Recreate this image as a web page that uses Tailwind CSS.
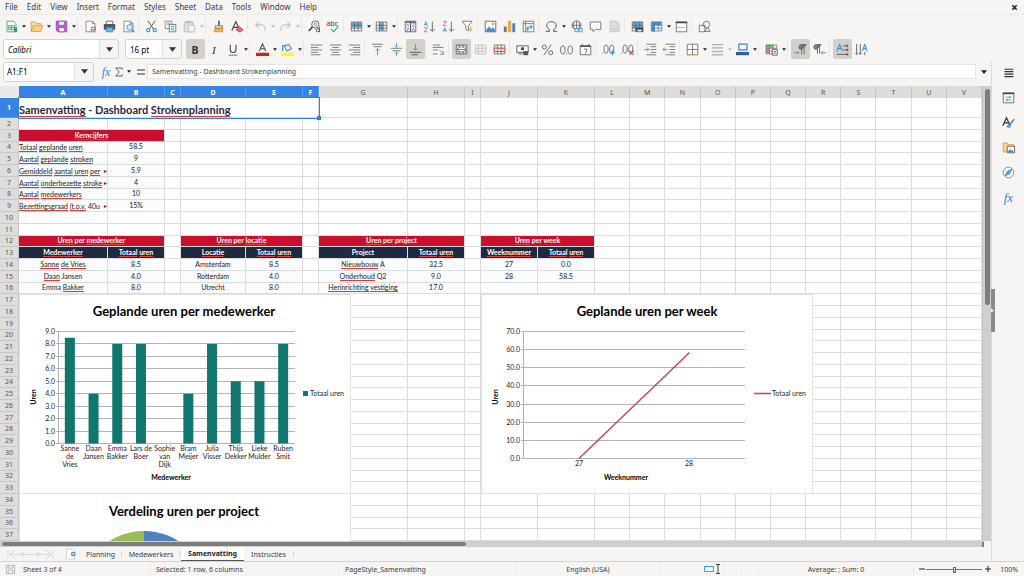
<!DOCTYPE html>
<html lang="nl">
<head>
    <meta charset="UTF-8">
    <meta name="viewport" content="width=device-width, initial-scale=1.0">
    <title>Dashboard Strokenplanning</title>
    <script src="https://cdn.jsdelivr.net/npm/@tailwindcss/browser@4"></script>
</head>
<body class="h-screen overflow-hidden flex flex-col bg-[#f6f5f4] text-[#3c3c3c] text-[7px] leading-none font-['Noto_Sans',sans-serif]">
    <!-- Menu bar -->
    <header class="h-[15px] shrink-0 flex items-center justify-between border-b border-[#ebeae8] pl-[5px] pr-[6px]">
        <nav>
            <ul id="menu" class="flex gap-[9px]"></ul>
        </nav>
        <button aria-label="Close document" class="w-[7px] h-[7px]"><svg viewBox="0 0 8 8" class="w-full h-full" stroke="#222" stroke-width="1.8"><path d="M1.5 1.5l5 5M6.500 1.500l-5 5"/></svg></button>
    </header>

    <!-- Toolbars -->
    <div id="standardBar" class="h-[22px] shrink-0 flex items-center pl-[2px]"></div>
    <div class="h-[24px] shrink-0 flex items-center pl-[3px]">
        <div class="w-[116px] h-[20px] flex border border-[#d5d2cf] rounded-[3px] overflow-hidden">
            <input aria-label="Font name" value="Calibri" class="min-w-0 flex-1 bg-white px-[4px] text-[8px] italic text-black outline-none">
            <button aria-label="Font list" class="w-[19px] flex items-center justify-center border-l border-[#e2e0dd]"><svg viewBox="0 0 8 5" class="w-[7px] h-[5px]"><path d="M0 0h8L4 5z" fill="#333"/></svg></button>
        </div>
        <div class="w-[57px] h-[20px] ml-[6px] mr-[4px] flex border border-[#d5d2cf] rounded-[3px] overflow-hidden">
            <input aria-label="Font size" value="16 pt" class="min-w-0 flex-1 bg-white px-[4px] text-[8px] text-black outline-none">
            <button aria-label="Size list" class="w-[19px] flex items-center justify-center border-l border-[#e2e0dd]"><svg viewBox="0 0 8 5" class="w-[7px] h-[5px]"><path d="M0 0h8L4 5z" fill="#333"/></svg></button>
        </div>
        <div id="formatBar" class="flex items-center"></div>
    </div>

    <div class="flex-1 min-h-0 flex">
        <main class="flex-1 min-w-0 flex flex-col">
            <!-- Formula bar -->
            <div class="h-[25px] shrink-0 flex items-center pl-[3px] pb-[4px]">
                <div class="w-[91px] h-[20px] flex border border-[#d5d2cf] rounded-[3px] overflow-hidden">
                    <input aria-label="Name box" value="A1:F1" class="min-w-0 flex-1 bg-white px-[3px] text-[8px] text-black outline-none">
                    <button aria-label="Names" class="w-[19px] flex items-center justify-center border-l border-[#e2e0dd]"><svg viewBox="0 0 8 5" class="w-[7px] h-[5px]"><path d="M0 0h8L4 5z" fill="#333"/></svg></button>
                </div>
                <button aria-label="Function wizard" class="w-[12px] ml-[6px] font-['Liberation_Serif',serif] italic text-[12px] text-[#2f86c6]">fx</button>
                <button aria-label="Sum" class="w-[12px] ml-px flex justify-center"><svg viewBox="0 0 10 12" class="w-[8px] h-[10px]" fill="none" stroke="#444"><path d="M9 3V1H1l4.500 5L1 11h8V9"/></svg></button>
                <button aria-label="Sum options" class="w-[8px] flex justify-center"><svg viewBox="0 0 6 4" class="w-[4px] h-[3px]"><path d="M0 0h6L3 4z" fill="#222"/></svg></button>
                <button aria-label="Formula" class="w-[10px] ml-[3px] flex justify-center"><svg viewBox="0 0 8 6" class="w-[8px] h-[6px]" stroke="#333" stroke-width="1.2"><path d="M0 1h8M0 5h8"/></svg></button>
                <input aria-label="Input line" value="Samenvatting - Dashboard Strokenplanning" class="flex-1 min-w-0 h-[15px] ml-px bg-white border border-[#e6e4e1] px-[4px] text-[7px] outline-none">
                <button aria-label="Expand formula bar" class="w-[15px] flex justify-center"><svg viewBox="0 0 8 5" class="w-[6px] h-[4px]"><path d="M0 0h8L4 5z" fill="#222"/></svg></button>
            </div>

            <!-- Sheet -->
            <div class="flex-1 min-h-0 flex">
                <div class="flex-1 min-w-0 relative overflow-hidden bg-white font-[Lato,sans-serif] text-[#222]">
                    <table class="flex flex-col h-full">
                        <thead id="columns" class="block h-[12px] shrink-0"></thead>
                        <tbody id="rows" class="flex flex-col flex-1 min-h-0"></tbody>
                    </table>
                    <!-- Selection of A1:F1 -->
                    <div class="absolute left-[18px] top-[11px] w-[302px] h-[22px] border border-[#2a7fe0]">
                        <div class="absolute -right-[2px] -bottom-[2px] w-[4px] h-[4px] bg-[#2a7fe0]"></div>
                    </div>
                    <!-- Floating charts -->
                    <svg id="barChart" viewBox="1 1 330 198" class="absolute left-[19px] top-[208px] w-[332px] h-[200px] bg-white border border-[#e2e2e2]"></svg>
                    <svg id="lineChart" viewBox="1 1 330 198" class="absolute left-[481px] top-[208px] w-[332px] h-[200px] bg-white border border-[#e2e2e2]"></svg>
                    <svg viewBox="1 0 330 200" class="absolute left-[19px] top-[408px] w-[332px] h-[200px] bg-white border-x border-[#e2e2e2]">
                        <text x="165" y="22" text-anchor="middle" class="text-[13px] font-bold fill-black">Verdeling uren per project</text>
                        <path d="M125 37a64 64 0 0 0-64 64h64z" fill="#9bbb59"/>
                        <path d="M125 37a64 64 0 0 1 64 64h-64z" fill="#4f81bd"/>
                    </svg>
                </div>
                <div class="w-[9px] bg-[#cfcfcf] border-l border-[#c4c4c4] pt-[3px] flex flex-col items-center">
                    <div class="w-[5px] h-[216px] rounded-full bg-[#7d7d7d]"></div>
                </div>
            </div>
            <div class="h-[6px] shrink-0 mr-[7px] bg-[#cfcfcf] pl-[2px] flex items-center justify-between">
                <div class="w-[464px] h-[4px] rounded-full bg-[#7d7d7d]"></div>
                <div class="w-[2px] h-[5px] bg-[#7d7d7d]"></div>
            </div>

            <!-- Sheet tabs -->
            <div class="h-[14px] shrink-0 flex items-stretch text-[7px]">
                <div class="w-[60px] flex items-center justify-center text-[#dcdad7]">
                    <svg viewBox="0 0 52 12" class="w-[52px] h-[11px]" fill="none" stroke="currentColor" stroke-width="1.2"><path d="M2 1v10M10 1L4 6l6 5M20 3l-4 3 4 3M33 3l4 3-4 3M43 1l6 5-6 5M51 1v10M4 6h45"/></svg>
                </div>
                <button aria-label="Add sheet" class="w-[20px] flex items-center justify-center"><svg viewBox="0 0 12 13" class="w-[11px] h-[12px]"><path d="M1.500 1h7l2 2v9h-9z" fill="#fff" stroke="#ccc"/><circle cx="9" cy="6.500" r="2.500" fill="#3a83c8"/><path d="M9 5v3M7.500 6.500h3" stroke="#fff" stroke-width=".8"/></svg></button>
                <button class="w-[42px] border-r border-[#d5d3d0] my-[4px] text-[7px]">Planning</button>
                <button class="w-[59px] border-r border-[#d5d3d0] my-[4px] text-[7px]">Medewerkers</button>
                <button class="w-[63px] bg-white border-b border-[#555] font-bold text-[#222]">Samenvatting</button>
                <button class="w-[50px] border-r border-[#d5d3d0] my-[4px] text-[7px]">Instructies</button>
            </div>
        </main>

        <!-- Sidebar -->
        <aside class="w-[33px] shrink-0 border-l border-[#dcdad7] relative flex flex-col items-center gap-[11px] pt-[4px]" id="sidebar">
            <div class="absolute -left-px top-[228px] w-[4px] h-[43px] bg-[#8b8b8b] flex items-center"><svg viewBox="0 0 4 6" class="w-[3px] h-[5px]"><path d="M0 0l4 3-4 3z" fill="#eee"/></svg></div>
        </aside>
    </div>

    <!-- Status bar -->
    <footer class="h-[15px] shrink-0 border-t border-[#d5d3d0] grid grid-cols-[151fr_188fr_178fr_143fr_65fr_17fr_17fr_155fr_110fr] items-center text-[7px]">
        <div class="flex items-center gap-[7px] pl-[5px] border-r border-[#e8e6e3]"><svg viewBox="0 0 12 12" class="w-[11px] h-[11px]" fill="none" stroke="#b5b3b0"><path d="M1.500 1.500h9v9h-9zM3.500 1.500v3h5v-3M3.500 10.500v-4h5v4"/></svg>Sheet 3 of 4</div>
        <div class="pl-[5px] border-r border-[#e8e6e3]">Selected: 1 row, 6 columns</div>
        <div class="pl-[6px] border-r border-[#e8e6e3]">PageStyle_Samenvatting</div>
        <div class="text-center border-r border-[#e8e6e3]">English (USA)</div>
        <div class="flex justify-end items-center gap-px pr-[3px] border-r border-[#e8e6e3]"><svg viewBox="0 0 18 10" class="w-[18px] h-[10px]" fill="none"><path d="M1.500 2.500h9v5h-9z" stroke="#3fa0cf" fill="#fff"/><path d="M13 .5h4M15 .5v9M13 9.500h4" stroke="#444"/></svg></div>
        <div class="border-r border-[#e8e6e3] h-[8px]"></div>
        <div class="border-r border-[#e8e6e3] h-[8px]"></div>
        <div class="text-center border-r border-[#e8e6e3]">Average: ; Sum: 0</div>
        <div class="flex items-center pl-[5px] pr-[6px]">
            <button aria-label="Zoom out" class="w-[7px] flex"><svg viewBox="0 0 6 6" class="w-[6px] h-[6px]" stroke="#222"><path d="M0 3h6"/></svg></button>
            <input type="range" aria-label="Zoom" class="min-w-0 w-[56px] h-[6px] appearance-none bg-transparent [&::-webkit-slider-runnable-track]:h-px [&::-webkit-slider-runnable-track]:bg-[#777] [&::-webkit-slider-thumb]:appearance-none [&::-webkit-slider-thumb]:w-[3px] [&::-webkit-slider-thumb]:h-[6px] [&::-webkit-slider-thumb]:-mt-[2px] [&::-webkit-slider-thumb]:bg-[#ddd] [&::-webkit-slider-thumb]:border [&::-webkit-slider-thumb]:border-[#666]">
            <button aria-label="Zoom in" class="w-[7px] ml-[3px] flex"><svg viewBox="0 0 6 6" class="w-[6px] h-[6px]" stroke="#222"><path d="M0 3h6M3 0v6"/></svg></button>
            <span class="ml-auto">100%</span>
        </div>
    </footer>

    <script>
        const menus = ["File", "Edit", "View", "Insert", "Format", "Styles", "Sheet", "Data", "Tools", "Window", "Help"];
        document.getElementById("menu").innerHTML = menus.map(m => `<li><button class="text-[8px]">${m}</button></li>`).join("");

        // Icon bodies, all drawn on a 16 x 16 grid
        const page = '<path d="M2.500 1.500h8l3 3v10h-11z" fill="#fff" stroke="#777"/><path d="M10.500 1.500v3h3" stroke="#777"/>';
        const lines = (d, c = "#666") => `<path d="${d}" stroke="${c}"/>`;
        const tableGrid = c => `<path d="M1.500 2.500h13v11h-13zM1.500 6.500h13M1.500 10h13M5.500 2.500v11M10 2.500v11" stroke="${c}"/>`;
        const icons = {
            new: '<path d="M2.500 1.500h8l3 3v10h-11z" fill="#fff" stroke="#2f9e5b"/><path d="M4.500 7h7v5h-7zM4.500 9.500h7M8 7v5" stroke="#2f9e5b"/><path d="M11 9h4v6h-4z" fill="#36a865"/>',
            open: '<path d="M1.500 13.500v-11h5l1 2h6v2" fill="#fbe3b5" stroke="#df8f2f"/><path d="M1.500 14l2.500-7h11.500l-2.500 7z" fill="#fad28c" stroke="#df8f2f"/>',
            save: '<path d="M1.500 1.500h13v13h-11l-2-2z" fill="#b768c9" stroke="#9742ab"/><path d="M4.500 1.500h7v5h-7z" fill="#fff" stroke="#9742ab"/><path d="M4.500 9.500h7v5h-7z" fill="#fff" stroke="#9742ab"/>',
            pdf: page + '<path d="M9 9h5M9 9v6M14 9v3h-5M11 12l3 3" stroke="#d33f3f"/>',
            print: '<path d="M4 1.500h8v4h-8z" fill="#fff" stroke="#555"/><path d="M1 5h14v7H1z" fill="#555"/><path d="M4 9h8v5.500h-8z" fill="#6fb8e6" stroke="#2d80b8"/>',
            preview: page + '<circle cx="9.500" cy="9" r="3.500" fill="#d6eefb" stroke="#2f86c6"/><path d="M12 12l3 3" stroke="#2f86c6" stroke-width="1.500"/>',
            cut: '<path d="M3.500 1l7 10M12.500 1l-7 10" stroke="#555" stroke-width="1.200"/><circle cx="4" cy="12.500" r="2" stroke="#2f86c6" stroke-width="1.300"/><circle cx="12" cy="12.500" r="2" stroke="#2f86c6" stroke-width="1.300"/>',
            copy: '<path d="M1.500 1.500h8v9h-8z" fill="#fff" stroke="#777"/><path d="M3.500 4h4M3.500 6h4" stroke="#3a93cf"/><path d="M6.500 5.500h8v9h-8z" fill="#fff" stroke="#666"/><path d="M8.500 8h4M8.500 10h4M8.500 12h4" stroke="#3a93cf"/>',
            paste: '<path d="M1.500 2.500h11v12h-11z" fill="#ddd" stroke="#bbb"/><path d="M4 1h6v3H4z" fill="#bbb"/><path d="M6.500 6.500h8v8h-8z" fill="#f3f3f3" stroke="#bbb"/>',
            brush: '<path d="M7.500 1h2v6h-2z" fill="#555"/><path d="M4 7h9v3H4z" fill="#ddd" stroke="#777"/><path d="M3.500 10.500h10l-1 4h-10z" fill="#f0b35a" stroke="#d7892e"/>',
            clear: '<path d="M1 13L6 2l5 11M3 9h6" stroke="#444" stroke-width="1.400"/><path d="M10 8l5 4-4 3-5-3z" fill="#e56d6d" stroke="#cf3d3d"/>',
            undo: '<path d="M6 2L2 6l4 4M2 6h7c4 0 5 3 4.500 7" stroke="#c4c2bf" stroke-width="1.300"/>',
            redo: '<path d="M10 2l4 4-4 4M14 6H7c-4 0-5 3-4.500 7" stroke="#c4c2bf" stroke-width="1.300"/>',
            find: '<circle cx="9" cy="5.500" r="4.500" stroke="#555"/><path d="M5.500 8.500l-4.500 5" stroke="#444" stroke-width="2"/><circle cx="9" cy="5.500" r="1.800" stroke="#3a93cf"/><circle cx="12" cy="12.500" r="2" stroke="#444"/><path d="M14 8v7" stroke="#444"/>',
            spell: '<text x="-1" y="7" font-size="9" fill="#444">abc</text><path d="M5 11l3 3.500 6-7" stroke="#3bb273" stroke-width="1.500"/>',
            row: '<path d="M2 3h12v6H2z" fill="#5badde"/>' + tableGrid("#666"),
            column: '<path d="M5 3h5v10H5z" fill="#5badde"/>' + tableGrid("#666"),
            sort: '<path d="M1.500 1.500h13v13h-13z" fill="#fff" stroke="#555"/><path d="M1.500 2.500h13M8 3v11.500" stroke="#555" stroke-width="1.500"/><path d="M3 8l1.500-3.500L6 8M10 13.500l1.500-3.500 1.500 3.500" stroke="#3a93cf"/><path d="M10 4.500h3L10 8h3M3 10h3l-3 3.500h3" stroke="#b45ac8"/>',
            asc: '<path d="M1.500 7l2-5 2 5M2 5.500h3" stroke="#3a93cf"/><path d="M1.500 9.500h4l-4 5h4" stroke="#b45ac8"/><path d="M11.500 2v12M8.500 11l3 3 3-3" stroke="#555"/>',
            desc: '<path d="M1.500 14.500l2-5 2 5M2 13h3" stroke="#3a93cf"/><path d="M1.500 2h4l-4 5h4" stroke="#b45ac8"/><path d="M11.500 2v12M8.500 11l3 3 3-3" stroke="#555"/>',
            filter: '<path d="M1.500 1.500h12l-4.500 6v6l-3-2v-4z" fill="#fff" stroke="#666"/><path d="M13 7l-4 5h3l-2 4 5-5h-3z" fill="#f0a03c"/>',
            image: '<path d="M1.500 1.500h13v13h-13z" fill="#fff" stroke="#555"/><path d="M2 13l4-5 3 3 2-2 3 4v1.500H2z" fill="#3a93cf"/><circle cx="11" cy="5" r="1.800" fill="#f0b035"/>',
            chart: '<path d="M1 8h3.500v7H1z" fill="#777"/><path d="M6 1h4v14H6z" fill="#efac43"/><path d="M11.500 4h3.500v11h-3.500z" fill="#3a83c8"/>',
            pivot: '<path d="M1.500 1.500h13v13h-13zM1.500 4.500h13M4.500 1.500v13" fill="#fff" stroke="#666"/><path d="M7 12V8.500h5M10.500 6.500l2 2-2 2M5.500 10.500l1.500 2 1.500-2" stroke="#3a93cf" stroke-width="1.300"/>',
            omega: '<path d="M1 14h4.500v-2C0 9 1.500 2 8 2s8 7 2.500 10v2H15" stroke="#555" stroke-width="1.200"/>',
            link: '<circle cx="8" cy="6.500" r="5.500" stroke="#666"/><path d="M2.500 6.500h11M8 1v11M5.500 2c-2 3-2 6 0 9M10.500 2c2 3 2 6 0 9" stroke="#666"/><path d="M6 10.500h4v4H6zM11 10.500h4v4h-4z" fill="#d6eefb" stroke="#3a93cf"/>',
            comment: '<path d="M1.500 2.500h13v9H8l-3 3v-3H1.500z" fill="#fff" stroke="#666"/>',
            footer: '<path d="M2.500 1.500h8l3 3v10h-11z" fill="#ddd" stroke="#bbb"/><path d="M5 11h6" stroke="#bbb"/>',
            printArea: '<path d="M2 2h12v8H2z" fill="#5badde"/>' + tableGrid("#666") + '<path d="M6 9h9v6H6z" fill="#555"/><path d="M8 12h5v2H8z" fill="#fff"/>',
            freeze: '<path d="M2 2h12v4H2zM2 2h4v12H2z" fill="#3a93cf"/>' + tableGrid("#5a7f9c"),
            split: '<path d="M1.500 2.500h13v12h-13z" fill="#fff" stroke="#666"/><path d="M1 3h14" stroke="#444" stroke-width="2"/><path d="M1.500 9h13" stroke="#3a93cf" stroke-dasharray="2 1"/>',
            shapes: '<path d="M1.500 6.500h7v8h-7z" stroke="#666"/><circle cx="10.500" cy="5.500" r="4" stroke="#666"/><path d="M8 14l4-5 3 5z" stroke="#666"/>',
            bold: '<text x="3" y="13" font-size="13" font-weight="700" fill="#333">B</text>',
            italic: '<text x="5" y="13" font-size="14" font-style="italic" font-family="Liberation Serif" fill="#333">I</text>',
            underline: '<path d="M4 2v6c0 5 7 5 7 0V2" stroke="#444" stroke-width="1.300"/><path d="M2 15h11" stroke="#3a93cf" stroke-width="1.300"/>',
            color: '<path d="M4 10L8 1l4 9M5.500 7h5" stroke="#444" stroke-width="1.300"/><path d="M0 12h16v4H0z" fill="#c9211e"/>',
            highlight: '<path d="M4 3l6-1 3 5-6 3z" fill="#d6eefb" stroke="#555"/><path d="M2 3v7M2 3l3 1" stroke="#3a93cf" stroke-width="1.500"/><path d="M0 12h16v4H0z" fill="#ffff00"/>',
            left: lines("M1 2.500h14M1 5.500h9M1 8.500h14M1 11.500h9M1 14.500h12"),
            center: lines("M1 2.500h14M4 5.500h8M1 8.500h14M4 11.500h8M2 14.500h12"),
            right: lines("M1 2.500h14M6 5.500h9M1 8.500h14M6 11.500h9M3 14.500h12"),
            top: lines("M1 1.500h14M3 4.500h10") + lines("M8 15V7M5.500 9.500L8 7l2.500 2.500", "#3a93cf"),
            middle: lines("M1 6.500h14M3 9.500h10") + lines("M8 0v5M6 3l2 2 2-2M8 16v-5M6 13l2-2 2 2", "#3a93cf"),
            bottom: lines("M1 11.500h14M3 14.500h8", "#444") + lines("M8 1v8M5.500 6.500L8 9l2.500-2.500", "#3a93cf"),
            wrap: lines("M1 2.500h9M1 5.500h13M1 8.500h6M1 13.500h6") + lines("M9 8.500l5 5M14 10v4h-4", "#3a93cf"),
            merge: '<path d="M1.500 5.500h13v5h-13z" fill="#fff"/>' + tableGrid("#4a5f75") + '<path d="M2 6h12v4H2z" fill="#fff"/><path d="M2 8h12M4 6L2 8l2 2M12 6l2 2-2 2" stroke="#3a93cf" stroke-width="1.300"/>',
            mergeGrey: tableGrid("#bbb"),
            unmerge: tableGrid("#666") + '<path d="M1.500 6.500h13v4h-13zM6 6.500v4M10 6.500v4" fill="#fff" stroke="#d33f3f"/>',
            currency: '<path d="M1 3.500h14v8H1z" fill="#fff" stroke="#444"/><circle cx="8" cy="7" r="2" fill="#444"/><path d="M9 10h6v5H9z" fill="#555"/><path d="M3 13.500h5" stroke="#444"/>',
            percent: '<circle cx="4" cy="5" r="2.500" stroke="#555"/><circle cx="12" cy="12" r="2.500" stroke="#555"/><path d="M12.500 2l-9 13" stroke="#555"/>',
            number: '<ellipse cx="3.500" cy="8.500" rx="2.800" ry="5" stroke="#555"/><ellipse cx="12.500" cy="8.500" rx="2.800" ry="5" stroke="#555"/><path d="M7.500 13h1v1h-1z" fill="#555"/>',
            date: '<path d="M1.500 3.500h13v11h-13z" fill="#fff" stroke="#555"/><path d="M1.500 4h13" stroke="#555" stroke-width="2"/><path d="M4 1v3M12 1v3" stroke="#555"/><path d="M6 7.500h4l-2 5.500" stroke="#555"/>',
            addDec: '<ellipse cx="5" cy="7.500" rx="2.500" ry="5" stroke="#555"/><ellipse cx="12" cy="7.500" rx="2.500" ry="5" stroke="#555"/><path d="M0 12h1v1H0z" fill="#555"/><path d="M13 9v6M10 12h6" stroke="#3a93cf" stroke-width="1.300"/>',
            delDec: '<ellipse cx="5" cy="7.500" rx="2.500" ry="5" stroke="#555"/><ellipse cx="12" cy="7.500" rx="2.500" ry="5" stroke="#555"/><path d="M0 12h1v1H0z" fill="#555"/><path d="M10.500 9.500l5 5M15.500 9.500l-5 5" stroke="#d33f3f" stroke-width="1.300"/>',
            indent: lines("M3 1.500h12M8 4.500h7M8 8h7M8 11.500h7M3 14.500h12") + lines("M0 8h6M3.500 5.500L6 8l-2.500 2.500", "#3a93cf"),
            outdent: lines("M3 1.500h12M8 4.500h7M8 8h7M8 11.500h7M3 14.500h12") + lines("M0 8h6M2.500 5.500L0 8l2.500 2.500", "#3a93cf"),
            borders: '<path d="M1.500 1.500h13v13h-13zM8 1.500v13M1.500 8h13" fill="#fff" stroke="#666"/><path d="M1.500 14.500h13" stroke="#e0a050"/>',
            lineStyle: '<path d="M1 2h14M1 6h14" stroke="#aaa" stroke-width="1.300"/><path d="M1 10.500h14M1 14.500h14" stroke="#b5b5b5" stroke-width="2"/>',
            lineColor: '<path d="M3.500 1.500h10v7h-10z" fill="#fff" stroke="#3a83c8" stroke-width="1.500"/><path d="M0 11h16v4H0z" fill="#2a62a5"/>',
            conditional: '<path d="M1 2h9v4H1z" fill="#6dc06d"/><path d="M1 6h5v7H1z" fill="#e78a8a"/>' + tableGrid("#777") + '<path d="M9 8h6v7H9z" fill="#fff" stroke="#555"/><path d="M10.500 10.500h3M10.500 12.500h3" stroke="#555"/>',
            ltr: '<path d="M9.500 14V2M12.500 14V2M15 2H9a3 3 0 0 0 0 6z" fill="#8a8886" stroke="#555"/>' + lines("M0 12h6M4 10l2 2-2 2", "#3a93cf"),
            rtl: '<path d="M5.500 13V2M8 13V2M10 2H4a3 3 0 0 0 0 6z" fill="#8a8886" stroke="#555"/>' + lines("M16 12h-6M12 10l-2 2 2 2", "#3a93cf"),
            horizontal: '<path d="M1 10l3.500-8L8 10M2.500 7h4" stroke="#3a93cf" stroke-width="1.400"/>' + lines("M9 3.500h6M13 2l2 1.500L13 5M9 8.500h6M13 7l2 1.500-2 1.500M1 14h14M13 12.500l2 1.500-2 1.500", "#444"),
            vertical: '<path d="M9 10l3-8 3 8M10 7h4" stroke="#3a93cf" stroke-width="1.400"/>' + lines("M2 1v13M.5 12L2 14l1.500-2M6.500 1v13M5 12l1.500 2L8 12M12 11v4", "#555"),
            hamburger: '<path d="M3 4h11M3 7h11M3 10h11M3 13h11" stroke="#333" stroke-width="1.500"/>',
            properties: '<path d="M1.500 2.500h13v12h-13z" fill="#fff" stroke="#555"/><path d="M1 3h14" stroke="#444" stroke-width="2"/><path d="M4 7.500h8M4 11h8M9.500 6v3M6.500 9.500v3" stroke="#3a93cf"/>',
            styles: '<path d="M1 12L5.500 2 10 12M3 8.500h5.500" stroke="#333" stroke-width="1.500"/><path d="M15 4l-6 7" stroke="#777" stroke-width="2"/><path d="M6 13c1-3 4-3 5-1-1 3-3 3-5 1z" fill="#5badde" stroke="#3a83c8"/>',
            gallery: '<path d="M1.500 13.500v-11h5l1 2h7v9z" fill="#fad28c" stroke="#df8f2f"/><path d="M6.500 6.500h9v8h-9z" fill="#fff" stroke="#555"/><path d="M7 13l3-3 2 2 1-1 2 3H7z" fill="#3a93cf"/>',
            navigator: '<circle cx="8" cy="8" r="6.500" fill="#fff" stroke="#777"/><path d="M12 4L9.500 9.500 4 12l2.500-5.500z" fill="#5badde" stroke="#2f86c6"/>',
            functions: '<text x="2" y="13" font-size="16" font-style="italic" font-family="Liberation Serif" fill="#2f86c6">fx</text>'
        };
        const svg = name => `<svg viewBox="0 0 16 16" fill="none" class="w-[13px] h-[13px] overflow-visible">${icons[name]}</svg>`;

        // "|" is a separator, "v" a drop-down arrow, "x" a disabled arrow, a leading "*" marks a pressed button
        function buildBar(id, spec) {
            document.getElementById(id).innerHTML = spec.split(" ").map(s => {
                if (s === "|") return '<span class="w-[4px] h-[18px] border-l border-[#eae8e5]"></span>';
                if (s === "v" || s === "x") return `<button aria-label="Options" class="w-[6px] h-[19px] flex items-center justify-center"><svg viewBox="0 0 6 4" class="w-[4px] h-[3px]"><path d="M0 0h6L3 4z" fill="${s === "v" ? "#222" : "#bbb"}"/></svg></button>`;
                const name = s.replace("*", "");
                const cls = s[0] === "*" ? "w-[19px] h-[20px] flex items-center justify-center rounded-[2px] bg-[#d3d0cc]" : "w-[19px] h-[20px] flex items-center justify-center";
                return `<button aria-label="${name}" class="${cls}">${svg(name)}</button>`;
            }).join("");
        }
        buildBar("standardBar", "new v open v save v | pdf print preview | cut copy paste x | brush clear | undo x redo x | find spell | row v column v | sort asc desc filter | image chart pivot | omega v link comment footer | printArea freeze v split | shapes");
        buildBar("formatBar", "*bold italic underline v | color v highlight v | left center right | top middle *bottom | wrap | *merge mergeGrey unmerge | currency v percent number date | addDec delDec | indent outdent | borders v lineStyle x lineColor v | conditional v | *ltr rtl | *horizontal vertical");
        document.getElementById("sidebar").insertAdjacentHTML("beforeend",
            ["hamburger", "properties", "styles", "gallery", "navigator", "functions"].map(n => `<button aria-label="${n}" class="h-[14px]">${svg(n)}</button>`).join(""));

        // Sheet: column A to V, row 1 to 37
        const letters = "ABCDEFGHIJKLMNOPQRSTUV".split("");
        const rowCls = "grid grid-cols-[19px_89px_57px_16px_65px_57px_16px_89px_57px_16px_57px_57px_repeat(11,minmax(0,1fr))]";
        const headCls = "border-r border-[#c9c8c6] bg-[#dedddb] text-[#555] font-normal text-[7px] flex items-center justify-center font-['Noto_Sans',sans-serif]";
        const headSelCls = "border-r border-[#5a9bea] bg-[#3584e4] text-white font-bold text-[7px] flex items-center justify-center font-['Noto_Sans',sans-serif]";
        document.getElementById("columns").innerHTML = `<tr class="${rowCls} h-[12px]"><th class="bg-[#e9e8e6]"></th>` +
            letters.map((l, i) => `<th scope="col" class="${i < 6 ? headSelCls : headCls}">${l}</th>`).join("") + "</tr>";

        const base = "relative border-r border-b border-[#dcdcdc] whitespace-nowrap overflow-hidden flex items-center min-h-0 text-[7px] ";
        const kinds = {
            empty: base,
            title: base + "col-span-6 text-[11px] font-bold text-[#1f2940] pt-[4px]",
            red: base + "col-span-2 justify-center bg-[#c8102e] text-white font-bold",
            navy: base + "justify-center bg-[#1f2940] text-white font-bold",
            label: base + "bg-[#f9fbfc] pt-[2px]",
            value: base + "justify-center bg-[#f9fbfc]"
        };
        // "~word" gets the spelling underline
        const mark = t => t.split(" ").map(w => w[0] === "~" ? `<span class="border-b border-[#e23838]">${w.slice(1)}</span>` : w).join("&nbsp;");
        const cells = {
            1: { A: ["title", "~Samenvatting - Dashboard ~Strokenplanning"] },
            3: { A: ["red", "~Kerncijfers"] },
            4: { A: ["label", "~Totaal ~geplande ~uren"], B: ["value", "58.5"] },
            5: { A: ["label", "~Aantal ~geplande ~stroken"], B: ["value", "9"] },
            6: { A: ["label", "~Gemiddeld ~aantal ~uren ~per", 1], B: ["value", "5.9"] },
            7: { A: ["label", "~Aantal ~onderbezette ~stroke", 1], B: ["value", "4"] },
            8: { A: ["label", "~Aantal ~medewerkers"], B: ["value", "10"] },
            9: { A: ["label", "~Bezettingsgraad ~(t.o.v. 40u", 1], B: ["value", "15%"] },
            12: { A: ["red", "~Uren per ~medewerker"], D: ["red", "~Uren per ~locatie"], G: ["red", "~Uren per project"], J: ["red", "~Uren per week"] },
            13: { A: ["navy", "~Medewerker"], B: ["navy", "~Totaal ~uren"], D: ["navy", "~Locatie"], E: ["navy", "~Totaal ~uren"], G: ["navy", "Project"], H: ["navy", "~Totaal ~uren"], J: ["navy", "~Weeknummer"], K: ["navy", "~Totaal ~uren"] },
            14: { A: ["value", "~Sanne ~de ~Vries"], B: ["value", "8.5"], D: ["value", "Amsterdam"], E: ["value", "8.5"], G: ["value", "~Nieuwbouw A"], H: ["value", "32.5"], J: ["value", "27"], K: ["value", "0.0"] },
            15: { A: ["value", "~Daan Jansen"], B: ["value", "4.0"], D: ["value", "Rotterdam"], E: ["value", "4.0"], G: ["value", "~Onderhoud Q2"], H: ["value", "9.0"], J: ["value", "28"], K: ["value", "58.5"] },
            16: { A: ["value", "Emma ~Bakker"], B: ["value", "8.0"], D: ["value", "Utrecht"], E: ["value", "8.0"], G: ["value", "~Herinrichting ~vestiging"], H: ["value", "17.0"] }
        };
        const more = '<span class="absolute right-0 top-[3px] text-[6px] text-[#a01020] bg-[#f9fbfc]">&#9656;</span>';
        let html = "";
        for (let r = 1; r <= 37; r++) {
            html += `<tr class="${rowCls} ${r === 1 ? "h-[20px] shrink-0" : "flex-1 min-h-0"}"><th scope="row" class="${r === 1 ? headSelCls : headCls} border-b min-h-0">${r}</th>`;
            for (let c = 0; c < 22; c++) {
                const cell = (cells[r] || {})[letters[c]];
                if (!cell) { html += `<td class="${kinds.empty}"></td>`; continue; }
                const span = cell[0] === "title" ? 6 : cell[0] === "red" ? 2 : 1;
                html += `<td class="${kinds[cell[0]]}" colspan="${span}"><span>${mark(cell[1])}</span>${cell[2] ? more : ""}</td>`;
                c += span - 1;
            }
            html += "</tr>";
        }
        document.getElementById("rows").innerHTML = html;

        // Charts
        const label = (x, y, t, anchor = "middle", cls = "text-[7px] fill-[#222]") => `<text x="${x}" y="${y}" text-anchor="${anchor}" class="${cls}">${t}</text>`;
        const titleCls = "text-[13px] font-bold fill-black";
        const axisCls = "text-[7px] font-bold fill-black";
        function axes(x0, x1, y0, y1, max, step) {
            let out = "";
            for (let v = 0; v <= max; v += step) {
                const y = Math.round(y1 - (y1 - y0) * v / max) + 0.5;
                out += `<path d="M${x0 - 2} ${y}H${x1}" stroke="#b3b3b3"/>` + label(x0 - 3, y + 2, v.toFixed(1), "end");
            }
            return out + `<path d="M${x0 + 0.5} ${y0}V${y1}" stroke="#b3b3b3"/>`;
        }

        const staff = [["Sanne de Vries", 8.5], ["Daan Jansen", 4], ["Emma Bakker", 8], ["Lars_de Boer", 8], ["Sophie van Dijk", 0], ["Bram Meijer", 4], ["Julia Visser", 8], ["Thijs Dekker", 5], ["Lieke Mulder", 5], ["Ruben Smit", 8]];
        let bars = label(165, 22, "Geplande uren per medewerker", "middle", titleCls) + axes(39, 276, 37, 149, 9, 1);
        staff.forEach(([name, hours], i) => {
            const x = 39 + 23.7 * (i + 0.5);
            const h = 112 * hours / 9;
            bars += `<rect x="${x - 5}" y="${149.5 - h}" width="10" height="${h}" fill="#10766e"/>`;
            name.split(" ").forEach((part, n) => bars += label(x, 157 + n * 8, part.replace("_", " ")));
        });
        bars += label(152, 186, "Medewerker", "middle", axisCls);
        bars += `<text transform="translate(17 103) rotate(-90)" text-anchor="middle" class="text-[7px] font-bold fill-black">Uren</text>`;
        bars += '<rect x="284" y="97" width="5" height="5" fill="#10766e"/>' + label(291, 102, "Totaal uren", "start");
        document.getElementById("barChart").innerHTML = bars;

        document.getElementById("lineChart").innerHTML = label(166, 22, "Geplande uren per week", "middle", titleCls) + axes(42, 264, 37, 164, 70, 10) +
            '<path d="M98 164.500L208.500 58.500" stroke="#c4455f" stroke-width="1.500"/>' +
            label(98, 172, "27") + label(208, 172, "28") + label(145, 186, "Weeknummer", "middle", axisCls) +
            '<text transform="translate(17 103) rotate(-90)" text-anchor="middle" class="text-[7px] font-bold fill-black">Uren</text>' +
            '<path d="M273 99.500h17" stroke="#c4455f" stroke-width="1.500"/>' + label(291, 102, "Totaal uren", "start");
    </script>
</body>
</html>
